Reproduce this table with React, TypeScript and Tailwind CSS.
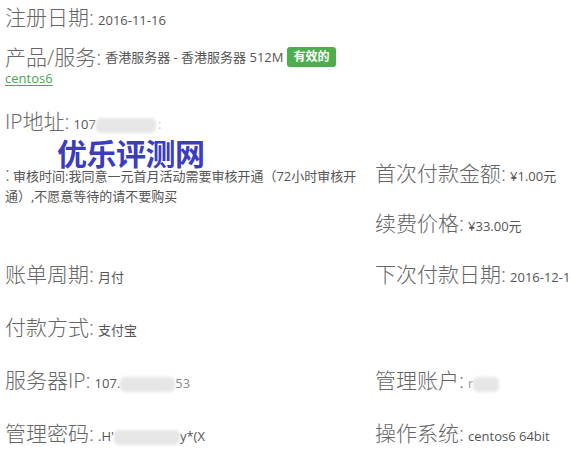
import React from "react";

const LF = { fontFamily: '"Open Sans", "Noto Sans CJK SC", sans-serif' } as const;

function Label({ children }: { children: React.ReactNode }) {
  return <span className="text-[21px] font-light text-[#666]">{children}</span>;
}

function Val({ children }: { children: React.ReactNode }) {
  return <span className="text-[13px] text-[#555] ml-[4px]">{children}</span>;
}

function Blur({ w }: { w: number }) {
  return (
    <span
      className="inline-block h-[15px] align-middle rounded-[5px] bg-[#e6e6e6] blur-[1.5px]"
      style={{ width: w }}
    />
  );
}

function Item({ label, children, className = "" }: { label: React.ReactNode; children?: React.ReactNode; className?: string }) {
  return (
    <div className={"h-[28px] leading-[28px] whitespace-nowrap " + className}>
      <Label>{label}</Label>
      {children}
    </div>
  );
}

export default function App() {
  return (
    <div className="relative w-[571px] h-[454px] overflow-hidden bg-white pl-[5px]" style={LF}>
      <Item label="注册日期:" className="mt-[3px]">
        <Val>2016-11-16</Val>
      </Item>
      <div className="mt-[14px] h-[24px] leading-[24px] whitespace-nowrap flex items-center">
        <Label>产品/服务:</Label>
        <Val>香港服务器 - 香港服务器 512M</Val>
        <span className="ml-[4px] inline-flex items-center h-[20px] px-[6px] rounded-[3px] bg-[#4cae4c] text-white text-[12px] font-bold leading-none">
          有效的
        </span>
      </div>
      <div className="h-[16px] leading-[16px]">
        <a className="text-[13px] text-[#4fa15a] underline underline-offset-2">centos6</a>
      </div>
      <Item label="IP地址:" className="mt-[22px]">
        <Val>
          10<span className="text-[#777]">7</span>
          <Blur w={60} />
          <span className="text-[#ccc] ml-[2px]">:</span>
        </Val>
      </Item>

      <div className="grid grid-cols-[370px_1fr] mt-[24px]">
        <div className="pt-[4px] text-[13px] text-[#555] leading-[20px] whitespace-nowrap">
          <span className="text-[21px] font-light text-[#666] leading-[20px]">:</span>
          <span className="ml-[3px]">审核时间:我同意一元首月活动需要审核开通（72小时审核开</span>
          <br />
          <span>通）,不愿意等待的请不要购买</span>
        </div>
        <div>
          <Item label="首次付款金额:">
            <Val>¥1.00元</Val>
          </Item>
          <Item label="续费价格:" className="mt-[22px]">
            <Val>¥33.00元</Val>
          </Item>
        </div>

        <Item label="账单周期:" className="mt-[23px]">
          <Val>月付</Val>
        </Item>
        <Item label="下次付款日期:" className="mt-[23px]">
          <Val>2016-12-16</Val>
        </Item>

        <Item label="付款方式:" className="mt-[25px]">
          <Val>支付宝</Val>
        </Item>
        <div className="mt-[25px] h-[28px]" />

        <Item label="服务器IP:" className="mt-[25px]">
          <Val>
            107.<Blur w={55} />
            <span className="text-[#888]">53</span>
          </Val>
        </Item>
        <Item label="管理账户:" className="mt-[25px]">
          <Val>
            <span className="text-[#999]">r</span>
            <Blur w={26} />
          </Val>
        </Item>

        <Item label="管理密码:" className="mt-[25px]">
          <Val>
            .H'<Blur w={66} />
            y*(X
          </Val>
        </Item>
        <Item label="操作系统:" className="mt-[25px]">
          <Val>centos6 64bit</Val>
        </Item>
      </div>

      <div
        className="absolute left-[57px] top-[136px] text-[30px] leading-[32px] font-bold text-[#3b3cc0] tracking-[-0.5px]"
        style={{ fontFamily: '"Noto Sans CJK SC", sans-serif', textShadow: "0 -3px 4px #fff" }}
      >
        优乐评测网
      </div>
    </div>
  );
}
